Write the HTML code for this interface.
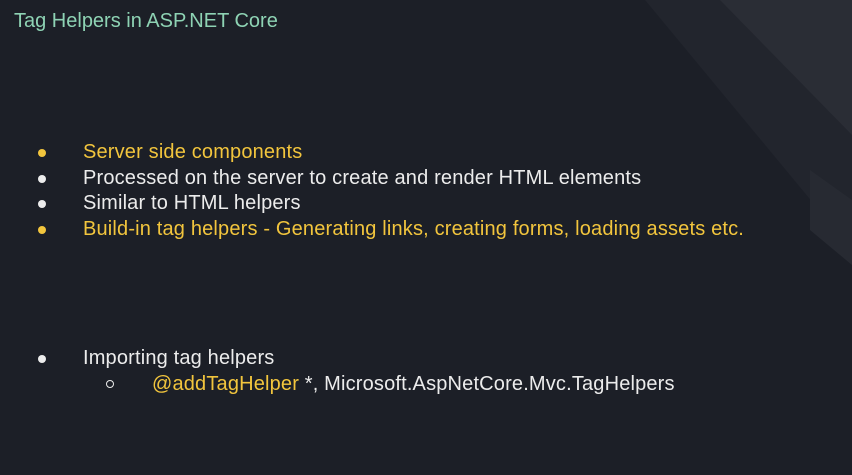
<!DOCTYPE html>
<html><head><style>
body{margin:0;width:852px;height:475px;background:#1c1f27;overflow:hidden;position:relative;font-family:"Liberation Sans",sans-serif}
svg{position:absolute;left:0;top:0}
.t{position:absolute;white-space:nowrap;font-size:20px;letter-spacing:0.17px}
.w{color:#ececec}.y{color:#f2c53d}
.b{position:absolute;width:8px;height:8px;border-radius:50%}
</style></head><body>
<svg width="852" height="475">
<polygon points="645,0 852,0 852,250" fill="#22252d"/>
<polygon points="720,0 852,0 852,135" fill="#2a2d35"/>
<polygon points="810,170 852,200 852,265 810,230" fill="#272a32"/>
</svg>
<div class="t" style="left:14px;top:10px;font-size:20px;letter-spacing:0;color:#8ed3b4">Tag Helpers in ASP.NET Core</div>
<div class="b" style="left:38px;top:149px;background:#f2c53d"></div>
<div class="t y" style="left:83px;top:141px">Server side components</div>
<div class="b" style="left:38px;top:175px;background:#ececec"></div>
<div class="t w" style="left:83px;top:167px">Processed on the server to create and render HTML elements</div>
<div class="b" style="left:38px;top:200px;background:#ececec"></div>
<div class="t w" style="left:83px;top:192px">Similar to HTML helpers</div>
<div class="b" style="left:38px;top:226px;background:#f2c53d"></div>
<div class="t y" style="left:83px;top:218px">Build-in tag helpers - Generating links, creating forms, loading assets etc.</div>
<div class="b" style="left:38px;top:355px;background:#ececec"></div>
<div class="t w" style="left:83px;top:347px">Importing tag helpers</div>
<div style="position:absolute;left:106px;top:380px;width:6px;height:6px;border:1.5px solid #ececec;border-radius:50%"></div>
<div class="t" style="left:152px;top:373px"><span class="y">@addTagHelper</span><span class="w"> *, Microsoft.AspNetCore.Mvc.TagHelpers</span></div>
</body></html>
